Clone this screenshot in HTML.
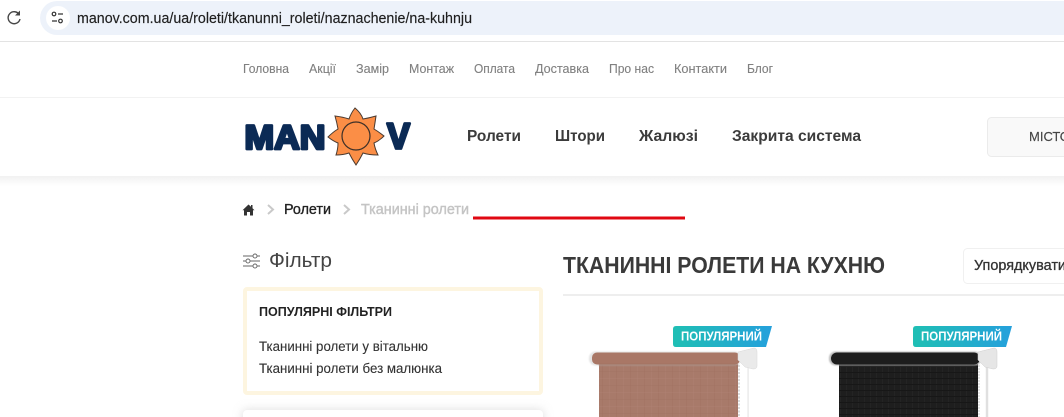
<!DOCTYPE html>
<html><head><meta charset="utf-8"><style>
html,body{margin:0;padding:0;background:#fff;width:1064px;height:417px;overflow:hidden}
svg{display:block}
text{font-family:"Liberation Sans",sans-serif}
</style></head><body>
<svg width="1064" height="417" viewBox="0 0 1064 417" xmlns="http://www.w3.org/2000/svg">
<defs>
<linearGradient id="g" x1="0" x2="1" y1="0" y2="0"><stop offset="0" stop-color="#1fbfb4"/><stop offset="1" stop-color="#25a0dc"/></linearGradient>
<linearGradient id="hs" x1="0" x2="0" y1="0" y2="1"><stop offset="0" stop-color="#f1f1f1"/><stop offset="1" stop-color="#fff"/></linearGradient>
<filter id="b1" x="-20%" y="-20%" width="140%" height="140%"><feGaussianBlur stdDeviation="0.8"/></filter>
<filter id="b4" x="-20%" y="-100%" width="140%" height="300%"><feGaussianBlur stdDeviation="5"/></filter>
<filter id="b05" x="-20%" y="-20%" width="140%" height="140%"><feGaussianBlur stdDeviation="0.5"/></filter>
<pattern id="wv" width="14" height="14" patternUnits="userSpaceOnUse"><rect width="14" height="14" fill="#a87a6a"/><rect width="1" height="14" fill="#a06f5f" opacity=".35"/><rect x="7" width="1" height="14" fill="#b08474" opacity=".35"/><rect width="14" height="1" fill="#b38677" opacity=".3"/><rect y="7" width="14" height="1" fill="#9f7060" opacity=".3"/></pattern>
<pattern id="wk" width="6" height="6" patternUnits="userSpaceOnUse"><rect width="6" height="6" fill="#1e1e1e"/><rect width="1" height="6" fill="#262626" opacity=".7"/><rect width="6" height="1" fill="#171717"/></pattern>
</defs>

<!-- browser bar -->
<rect x="0" y="41" width="1064" height="1" fill="#e3e3e3"/>
<rect x="40" y="1" width="1040" height="34" rx="17" fill="#edf2fa"/>
<circle cx="58" cy="18" r="12" fill="#fff"/>
<path d="M19.2 14.500A6 6 0 1 0 20 19" fill="none" stroke="#474747" stroke-width="1.4"/>
<path d="M20 10.500V15.500H15Z" fill="#474747"/>
<circle cx="54" cy="14" r="1.8" fill="none" stroke="#333" stroke-width="1.2"/>
<path d="M58 14h5M52 21h5" stroke="#333" stroke-width="1.3" fill="none"/>
<circle cx="60.500" cy="21" r="1.8" fill="none" stroke="#333" stroke-width="1.2"/>
<text x="77" y="23" font-size="14.5" fill="#1f1f1f" stroke="#1f1f1f" stroke-width=".15" textLength="395" lengthAdjust="spacingAndGlyphs">manov.com.ua/ua/roleti/tkanunni_roleti/naznachenie/na-kuhnju</text>

<!-- top menu -->
<rect x="0" y="97" width="1064" height="1" fill="#f2f2f2"/>
<g font-size="13" fill="#808080" stroke="#808080" stroke-width=".12">
<text x="243" y="73" textLength="46" lengthAdjust="spacingAndGlyphs">Головна</text>
<text x="309" y="73" textLength="27" lengthAdjust="spacingAndGlyphs">Акції</text>
<text x="356" y="73" textLength="33" lengthAdjust="spacingAndGlyphs">Замір</text>
<text x="409" y="73" textLength="45" lengthAdjust="spacingAndGlyphs">Монтаж</text>
<text x="474" y="73" textLength="41" lengthAdjust="spacingAndGlyphs">Оплата</text>
<text x="535" y="73" textLength="54" lengthAdjust="spacingAndGlyphs">Доставка</text>
<text x="609" y="73" textLength="45" lengthAdjust="spacingAndGlyphs">Про нас</text>
<text x="674" y="73" textLength="53" lengthAdjust="spacingAndGlyphs">Контакти</text>
<text x="747" y="73" textLength="26" lengthAdjust="spacingAndGlyphs">Блог</text>
</g>

<!-- logo -->
<g font-weight="700" fill="#0b2a55" stroke="#0b2a55" stroke-width="2.8" stroke-linejoin="round">
<text x="244.500" y="149" font-size="34" textLength="81" lengthAdjust="spacingAndGlyphs">MAN</text>
<text x="387" y="148.500" font-size="36" textLength="23" lengthAdjust="spacingAndGlyphs">V</text>
</g>
<path d="M355 108Q361 113 363 119Q369 118 376 116Q375 123 374 129Q379 132 384 136Q379 141 374 143Q375 149 378 155Q369 155 363 153Q360 159 356 165Q352 159 349 153Q343 155 336 155Q338 149 338 143Q333 141 328 137Q333 132 338 129Q337 123 335 116Q343 117 349 119Q351 113 355 108Z" fill="#fb8e46" stroke="#4a3a30" stroke-width="1"/>
<circle cx="356" cy="136" r="14" fill="#fb8e46" stroke="#3d3028" stroke-width="1.2"/>

<!-- main nav -->
<g font-size="16" font-weight="700" fill="#3b3b3b">
<text x="467" y="141" textLength="54" lengthAdjust="spacingAndGlyphs">Ролети</text>
<text x="555" y="141" textLength="50" lengthAdjust="spacingAndGlyphs">Штори</text>
<text x="639" y="141" textLength="59" lengthAdjust="spacingAndGlyphs">Жалюзі</text>
<text x="732" y="141" textLength="129" lengthAdjust="spacingAndGlyphs">Закрита система</text>
</g>
<rect x="987.500" y="117.500" width="100" height="39" rx="4" fill="#f9f9f9" stroke="#ebebeb"/>
<text x="1029" y="141" font-size="13" fill="#444" stroke="#444" stroke-width=".15">МІСТО</text>

<!-- header shadow -->
<rect x="0" y="176" width="1064" height="10" fill="url(#hs)"/>

<!-- breadcrumb -->
<path d="M248.500 204.500L251 206.800V205H252.500V208.200L254.500 210.200H253V215.500H250V212H247V215.500H244V210.200H242.500Z" fill="#333"/>
<path d="M268 205L273 209.500L268 214" fill="none" stroke="#c9c9c9" stroke-width="2"/>
<text x="284" y="214" font-size="14.500" fill="#222" stroke="#222" stroke-width=".35" textLength="47" lengthAdjust="spacingAndGlyphs">Ролети</text>
<path d="M344 205L349 209.500L344 214" fill="none" stroke="#c9c9c9" stroke-width="2"/>
<text x="361" y="214" font-size="14.500" fill="#c4c4c4" stroke="#c4c4c4" stroke-width=".4" textLength="108" lengthAdjust="spacingAndGlyphs">Тканинні ролети</text>
<rect x="473" y="216.500" width="212" height="3" fill="#e00812"/>

<!-- filter -->
<g fill="none" stroke="#666" stroke-width=".9">
<path d="M243 256h10M257 256h3M243 261h3M250 261h10M243 266h10M257 266h3"/>
<circle cx="255" cy="256" r="2"/><circle cx="248" cy="261" r="2"/><circle cx="255" cy="266" r="2"/>
</g>
<text x="269" y="267" font-size="20.500" fill="#444" textLength="63" lengthAdjust="spacingAndGlyphs">Фільтр</text>

<rect x="245" y="289" width="296" height="104" rx="2" fill="#fff" stroke="#fdf5e0" stroke-width="4"/>
<text x="259" y="316" font-size="13" font-weight="700" fill="#222" textLength="133" lengthAdjust="spacingAndGlyphs">ПОПУЛЯРНІ ФІЛЬТРИ</text>
<text x="259" y="351" font-size="13.500" fill="#333" stroke="#333" stroke-width=".12" textLength="169" lengthAdjust="spacingAndGlyphs">Тканинні ролети у вітальню</text>
<text x="259" y="373" font-size="13.500" fill="#333" stroke="#333" stroke-width=".12" textLength="183" lengthAdjust="spacingAndGlyphs">Тканинні ролети без малюнка</text>
<rect x="243" y="410" width="300" height="20" fill="#bbb" opacity=".5" filter="url(#b4)"/>
<rect x="243" y="410" width="300" height="12" rx="4" fill="#fff"/>

<!-- title -->
<text x="563" y="273" font-size="23" font-weight="700" fill="#3a3a3a" textLength="322" lengthAdjust="spacingAndGlyphs">ТКАНИННІ РОЛЕТИ НА КУХНЮ</text>
<rect x="563" y="294" width="501" height="2" fill="#eee"/>
<rect x="963.500" y="248.500" width="120" height="35" rx="4" fill="#fff" stroke="#f0f0f0"/>
<text x="974" y="270" font-size="14.500" fill="#333" stroke="#333" stroke-width=".3" textLength="92" lengthAdjust="spacingAndGlyphs">Упорядкувати</text>

<!-- product 1 -->
<rect x="599" y="362" width="139" height="60" fill="url(#wv)"/>
<rect x="747.500" y="365" width="1.200" height="55" fill="#e6e6e6"/>
<rect x="589" y="351.500" width="152" height="14" rx="6.500" fill="#ddd" opacity=".8" filter="url(#b1)"/>
<rect x="592" y="352.500" width="148" height="12" rx="5" fill="#a97766"/>
<rect x="599" y="364" width="139" height="2" fill="#8f6252" opacity=".5" filter="url(#b05)"/>
<path d="M738 352L754 348Q757 348 757 352V366Q757 369 753 369L745 367L738 360Z" fill="#eaeaea" stroke="#d8d8d8" stroke-width=".5"/>
<path d="M739 365V417" stroke="#c4c4c4" stroke-width="1.200" stroke-dasharray="2 1.500"/>
<path d="M673 329Q673 326 676 326H772L766 347H676Q673 347 673 344Z" fill="url(#g)"/>
<text x="681" y="340.500" font-size="12.500" font-weight="700" fill="#fff" textLength="81" lengthAdjust="spacingAndGlyphs">ПОПУЛЯРНИЙ</text>

<!-- product 2 -->
<rect x="839" y="362" width="139" height="60" fill="url(#wk)"/>
<rect x="986" y="365" width="2" height="55" fill="#d8d8d8" filter="url(#b05)"/>
<rect x="829" y="351.500" width="152" height="14" rx="6.500" fill="#bbb" filter="url(#b1)"/>
<rect x="831" y="352.500" width="149" height="12" rx="6" fill="#1d1d1d"/>
<rect x="839" y="364.500" width="139" height="1.500" fill="#555" opacity=".6"/>
<path d="M978 352L994 348Q997 348 997 352V366Q997 369 993 369L985 367L978 360Z" fill="#e6e6e6" stroke="#cfcfcf" stroke-width=".5"/>
<path d="M979 365V417" stroke="#ccc" stroke-width="1" stroke-dasharray="2 1"/>
<path d="M913 329Q913 326 916 326H1012L1006 347H916Q913 347 913 344Z" fill="url(#g)"/>
<text x="921" y="340.500" font-size="12.500" font-weight="700" fill="#fff" textLength="81" lengthAdjust="spacingAndGlyphs">ПОПУЛЯРНИЙ</text>
</svg>
</body></html>
